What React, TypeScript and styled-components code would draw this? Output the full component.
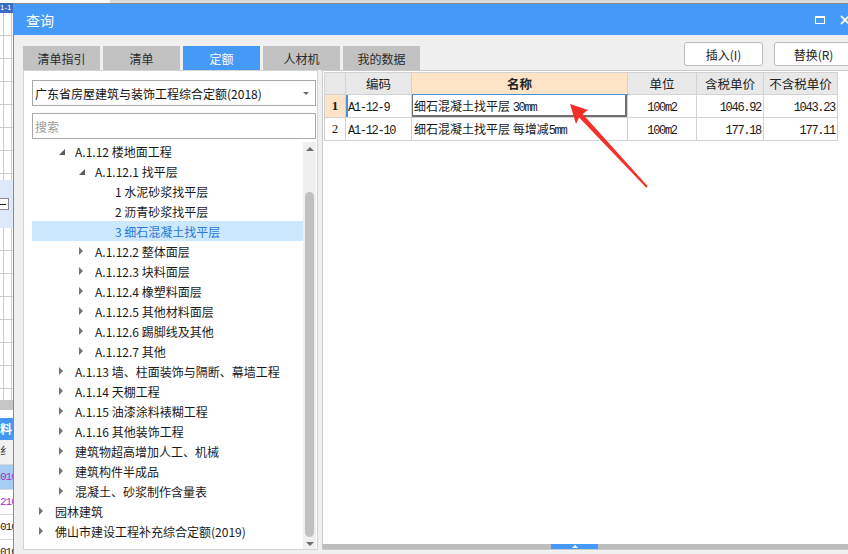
import React from "react";
import styled, { createGlobalStyle } from "styled-components";

const GlobalStyle = createGlobalStyle`
  html, body {
    margin: 0;
    padding: 0;
    background: #fff;
  }
  body {
    font-family: "Noto Sans CJK SC", "Noto Sans", sans-serif;
    overflow: hidden;
  }
  * {
    box-sizing: border-box;
  }
`;

const Screen = styled.div`
  width: 848px;
  height: 554px;
  overflow: hidden;
  display: flex;
  flex-direction: column;
  background: #fff;
`;

const TopStrip = styled.div`
  height: 3px;
  flex-shrink: 0;
  background: linear-gradient(to right, #fafafa 0 110px, #dcdcdc 110px);
`;

const Desk = styled.div`
  flex: 1;
  min-height: 0;
  display: flex;
`;

/* the spreadsheet window that peeks out behind the dialog */
const BackWindow = styled.div`
  width: 13px;
  flex-shrink: 0;
  display: flex;
  flex-direction: column;
  overflow: hidden;
  font-family: "Liberation Sans", sans-serif;
`;

const BackCaption = styled.div`
  height: 10px;
  flex-shrink: 0;
  background: #3a6dc2;
  color: #fff;
  font-size: 8px;
  line-height: 10px;
  white-space: nowrap;
`;

const BackSheet = styled.div<{ $h: number }>`
  height: ${({ $h }) => $h}px;
  flex-shrink: 0;
  background-color: #fff;
  background-image: linear-gradient(
      to right,
      transparent 3px,
      #f9c57f 3px,
      #f9c57f 4px,
      transparent 4px,
      transparent 11px,
      #f9c57f 11px,
      #f9c57f 12px,
      transparent 12px
    ),
    repeating-linear-gradient(to bottom, transparent 0 22px, #cdcdcd 22px 23px);
`;

const BackBand = styled.div`
  height: 48px;
  flex-shrink: 0;
  background: #dde8fb;
  display: flex;
  align-items: center;
`;

const BackToggle = styled.div`
  width: 9px;
  height: 12px;
  border: 1px solid #8a8a8a;
  border-left: none;
  background: #fff;
  display: flex;
  align-items: center;

  &::after {
    content: "";
    width: 6px;
    height: 1px;
    background: #222;
  }
`;

const BackBar = styled.div`
  height: 10px;
  margin-bottom: 8px;
  flex-shrink: 0;
  background: #c6c6c6;
`;

const BackHeader = styled.div`
  height: 22px;
  flex-shrink: 0;
  background: #4597f2;
  color: #fff;
  font-weight: 700;
  font-size: 12px;
  line-height: 22px;
  font-family: "Noto Sans CJK SC", sans-serif;
  white-space: nowrap;
  overflow: hidden;
`;

const BackRow = styled.div<{ $bg: string; $color: string }>`
  height: 25px;
  flex-shrink: 0;
  background: ${({ $bg }) => $bg};
  color: ${({ $color }) => $color};
  border-bottom: 1px solid #d8d8d8;
  font-size: 11px;
  line-height: 24px;
  white-space: nowrap;
  overflow: hidden;
  font-family: "Liberation Mono", "Noto Sans CJK SC", monospace;
  letter-spacing: -1px;
`;

/* dialog */
const Dialog = styled.div`
  width: 848px;
  flex-shrink: 0;
  display: flex;
  flex-direction: column;
  border-left: 1px solid #8c8c8c;
  border-top: 1px solid #8c8c8c;
  background: #f0f0f0;
`;

const TitleBar = styled.div`
  height: 31px;
  flex-shrink: 0;
  background: #4599f7;
  display: flex;
  align-items: center;
  padding: 0 11px 0 12px;
  color: #fff;
  font-size: 14px;
`;

const WindowControls = styled.div`
  margin-left: auto;
  display: flex;
  align-items: center;
  gap: 15px;
`;

const MaximizeIcon = styled.div`
  width: 10px;
  height: 8px;
  border: 1.5px solid #fff;
  border-top-width: 2.5px;
`;

const DialogBody = styled.div`
  flex: 1;
  min-height: 0;
  display: flex;
  flex-direction: column;
  padding: 7px 8px 4px 9px;
`;

const HeaderRow = styled.div`
  height: 28px;
  flex-shrink: 0;
  display: flex;
`;

const Tabs = styled.div`
  align-self: flex-end;
  display: flex;
  gap: 3px;
`;

const Tab = styled.div<{ $active?: boolean }>`
  width: 77px;
  height: 24px;
  display: flex;
  align-items: center;
  justify-content: center;
  font-size: 12px;
  background: ${({ $active }) => ($active ? "#4599f7" : "#c2c2c2")};
  color: ${({ $active }) => ($active ? "#fff" : "#2a2a2a")};
`;

const Actions = styled.div`
  margin-left: auto;
  display: flex;
  gap: 11px;
`;

const ActionButton = styled.button`
  width: 79px;
  height: 24px;
  background: #fff;
  border: 1px solid #bcbcbc;
  border-radius: 3px;
  font-family: "Noto Sans CJK SC", sans-serif;
  font-size: 12px;
  color: #222;
  padding: 0;
`;

const ContentRow = styled.div`
  flex: 1;
  min-height: 0;
  display: flex;
  gap: 4px;
`;

const LeftPanel = styled.div`
  width: 295px;
  flex-shrink: 0;
  display: flex;
  flex-direction: column;
  background: #fff;
  border: 1px solid #d4d4d4;
  padding: 9px 1px 0 8px;
`;

const FieldBox = styled.div`
  height: 26px;
  flex-shrink: 0;
  border: 1px solid #a9a9a9;
  display: flex;
  align-items: center;
  padding: 0 6px 0 2px;
  font-size: 12px;
  color: #111;
  & + & {
    margin-top: 7px;
  }
`;

const Placeholder = styled.span`
  color: #9a9a9a;
`;

const Caret = styled.span`
  margin-left: auto;
  border-top: 3px solid #6a6a6a;
  border-left: 3px solid transparent;
  border-right: 3px solid transparent;
`;

const TreeArea = styled.div`
  flex: 1;
  min-height: 0;
  margin-top: 3px;
  display: flex;
`;

const TreeList = styled.div`
  flex: 1;
  overflow: hidden;
  padding-top: 0;
  margin-top: -1px;
`;

const TreeRow = styled.div<{ $level: number; $selected?: boolean }>`
  height: 20px;
  display: flex;
  align-items: center;
  padding-left: ${({ $level }) => $level * 20}px;
  font-size: 12px;
  white-space: nowrap;
  background: ${({ $selected }) => ($selected ? "#cce8ff" : "transparent")};
  color: ${({ $selected }) => ($selected ? "#2b78d6" : "#1a1a1a")};
`;

const Toggle = styled.span`
  width: 23px;
  height: 20px;
  flex-shrink: 0;
  display: flex;
  align-items: center;
  padding-left: 7px;
`;

const Collapsed = styled.span`
  border-left: 4px solid #747474;
  border-top: 4px solid transparent;
  border-bottom: 4px solid transparent;
`;

const Expanded = styled.span`
  margin-top: 1px;
  border-bottom: 6px solid #5a5a5a;
  border-left: 6px solid transparent;
`;

const ScrollTrack = styled.div`
  width: 13px;
  flex-shrink: 0;
  display: flex;
  flex-direction: column;
  align-items: center;
  background: #efefef;
  padding: 5px 0 3px;
`;

const ArrowUp = styled.span`
  border-bottom: 4px solid #6e6e6e;
  border-left: 4px solid transparent;
  border-right: 4px solid transparent;
`;

const ArrowDown = styled.span`
  margin-top: 5px;
  border-top: 4px solid #6e6e6e;
  border-left: 4px solid transparent;
  border-right: 4px solid transparent;
`;

const Thumb = styled.div`
  width: 9px;
  margin-top: 41px;
  flex: 1;
  border-radius: 5px;
  background: #c1c1c1;
`;

const RightPanel = styled.div`
  flex: 1;
  min-width: 0;
  display: flex;
  flex-direction: column;
  background: #fff;
  border: 1px solid #c9c9c9;
`;

const TableArea = styled.div`
  flex: 1;
  min-height: 0;
  position: relative;
  padding: 1px;
`;

const Grid = styled.table`
  border-collapse: collapse;
  table-layout: fixed;
  width: 513px;
  font-size: 12px;
  color: #1a1a1a;
`;

const HeadCell = styled.th<{ $w: number; $accent?: boolean }>`
  width: ${({ $w }) => $w}px;
  height: 22px;
  padding: 0;
  background: ${({ $accent }) => ($accent ? "#fde4c6" : "#e8e8e8")};
  border: 1px solid #d2d2d2;
  border-bottom-color: ${({ $accent }) => ($accent ? "#4a90e2" : "#d2d2d2")};
  font-weight: ${({ $accent }) => ($accent ? 700 : 400)};
  font-size: 12.5px;
  color: #222;
  text-align: center;
`;

const RowNum = styled.td<{ $active?: boolean }>`
  height: 23px;
  padding: 0;
  border: 1px solid #d2d2d2;
  text-align: center;
  font-family: "Liberation Serif", serif;
  font-size: 13px;
  font-weight: ${({ $active }) => ($active ? 700 : 400)};
  background: ${({ $active }) => ($active ? "#fde4c6" : "#fff")};
`;

const Cell = styled.td<{ $align?: string; $focus?: boolean; $mark?: boolean }>`
  height: 23px;
  padding: 0 2px;
  border: 1px solid #d2d2d2;
  text-align: ${({ $align }) => $align || "left"};
  white-space: nowrap;
  overflow: hidden;
  box-shadow: ${({ $focus, $mark }) =>
    $focus
      ? "inset -2px -2px 0 #707070, inset 1px 0 0 #707070"
      : $mark
      ? "inset 2px 0 0 #4a90e2"
      : "none"};
`;

const Mono = styled.span`
  font-family: "Liberation Mono", monospace;
  font-size: 12px;
  letter-spacing: -1.3px;
`;

const ArrowMark = styled.svg`
  position: absolute;
  left: 217px;
  top: 24px;
  pointer-events: none;
`;

const SplitBar = styled.div`
  height: 5px;
  flex-shrink: 0;
  background: #bdbdbd;
  display: flex;
  padding-left: 228px;
`;

const SplitHandle = styled.div`
  width: 47px;
  background: #4599f7;
  display: flex;
  justify-content: center;
  align-items: center;

  &::after {
    content: "";
    border-bottom: 3px solid #fff;
    border-left: 3px solid transparent;
    border-right: 3px solid transparent;
  }
`;

type NodeState = "open" | "closed" | "leaf";

interface TreeNode {
  level: number;
  label: string;
  state: NodeState;
  selected?: boolean;
}

const treeNodes: TreeNode[] = [
  { level: 1, label: "A.1.12 楼地面工程", state: "open" },
  { level: 2, label: "A.1.12.1 找平层", state: "open" },
  { level: 3, label: "1 水泥砂浆找平层", state: "leaf" },
  { level: 3, label: "2 沥青砂浆找平层", state: "leaf" },
  { level: 3, label: "3 细石混凝土找平层", state: "leaf", selected: true },
  { level: 2, label: "A.1.12.2 整体面层", state: "closed" },
  { level: 2, label: "A.1.12.3 块料面层", state: "closed" },
  { level: 2, label: "A.1.12.4 橡塑料面层", state: "closed" },
  { level: 2, label: "A.1.12.5 其他材料面层", state: "closed" },
  { level: 2, label: "A.1.12.6 踢脚线及其他", state: "closed" },
  { level: 2, label: "A.1.12.7 其他", state: "closed" },
  { level: 1, label: "A.1.13 墙、柱面装饰与隔断、幕墙工程", state: "closed" },
  { level: 1, label: "A.1.14 天棚工程", state: "closed" },
  { level: 1, label: "A.1.15 油漆涂料裱糊工程", state: "closed" },
  { level: 1, label: "A.1.16 其他装饰工程", state: "closed" },
  { level: 1, label: "建筑物超高增加人工、机械", state: "closed" },
  { level: 1, label: "建筑构件半成品", state: "closed" },
  { level: 1, label: "混凝土、砂浆制作含量表", state: "closed" },
  { level: 0, label: "园林建筑", state: "closed" },
  { level: 0, label: "佛山市建设工程补充综合定额(2019)", state: "closed" },
];

interface QuotaRow {
  code: string;
  name: string;
  spec: string;
  unit: string;
  taxed: string;
  untaxed: string;
}

const quotaRows: QuotaRow[] = [
  { code: "A1-12-9", name: "细石混凝土找平层 ", spec: "30mm", unit: "100m2", taxed: "1046.92", untaxed: "1043.23" },
  { code: "A1-12-10", name: "细石混凝土找平层 每增减", spec: "5mm", unit: "100m2", taxed: "177.18", untaxed: "177.11" },
];

const columns = [
  { title: "", width: 21 },
  { title: "编码", width: 66 },
  { title: "名称", width: 216, accent: true },
  { title: "单位", width: 69 },
  { title: "含税单价", width: 67 },
  { title: "不含税单价", width: 74 },
];

const tabs = ["清单指引", "清单", "定额", "人材机", "我的数据"];

const backRows = [
  { text: "纟", bg: "#f1f1f1", color: "#333" },
  { text: "010", bg: "#a7cdf4", color: "#a133c9" },
  { text: "210", bg: "#fff", color: "#a133c9" },
  { text: "010", bg: "#fff", color: "#222" },
  { text: "010", bg: "#fff", color: "#222" },
];

function App() {
  return (
    <>
      <GlobalStyle />
      <Screen>
        <TopStrip />
        <Desk>
          <BackWindow>
            <BackCaption>1-1</BackCaption>
            <BackSheet $h={167} />
            <BackBand>
              <BackToggle />
            </BackBand>
            <BackSheet $h={172} />
            <BackBar />
            <BackHeader>料</BackHeader>
            {backRows.map((row, i) => (
              <BackRow key={`back-${i}`} $bg={row.bg} $color={row.color}>
                {row.text}
              </BackRow>
            ))}
          </BackWindow>

          <Dialog>
            <TitleBar>
              查询
              <WindowControls>
                <MaximizeIcon />
                <svg width="10" height="10" viewBox="0 0 10 10">
                  <path d="M1 1 L9 9 M9 1 L1 9" stroke="#fff" strokeWidth="1.8" />
                </svg>
              </WindowControls>
            </TitleBar>

            <DialogBody>
              <HeaderRow>
                <Tabs>
                  {tabs.map((tab) => (
                    <Tab key={tab} $active={tab === "定额"}>
                      {tab}
                    </Tab>
                  ))}
                </Tabs>
                <Actions>
                  <ActionButton>插入(I)</ActionButton>
                  <ActionButton>替换(R)</ActionButton>
                </Actions>
              </HeaderRow>

              <ContentRow>
                <LeftPanel>
                  <FieldBox>
                    广东省房屋建筑与装饰工程综合定额(2018)
                    <Caret />
                  </FieldBox>
                  <FieldBox>
                    <Placeholder>搜索</Placeholder>
                  </FieldBox>

                  <TreeArea>
                    <TreeList>
                      {treeNodes.map((node) => (
                        <TreeRow key={node.label} $level={node.level} $selected={node.selected}>
                          <Toggle>
                            {node.state === "open" && <Expanded />}
                            {node.state === "closed" && <Collapsed />}
                          </Toggle>
                          {node.label}
                        </TreeRow>
                      ))}
                    </TreeList>
                    <ScrollTrack>
                      <ArrowUp />
                      <Thumb />
                      <ArrowDown />
                    </ScrollTrack>
                  </TreeArea>
                </LeftPanel>

                <RightPanel>
                  <TableArea>
                    <Grid>
                      <thead>
                        <tr>
                          {columns.map((col, i) => (
                            <HeadCell key={`col-${i}`} $w={col.width} $accent={col.accent}>
                              {col.title}
                            </HeadCell>
                          ))}
                        </tr>
                      </thead>
                      <tbody>
                        {quotaRows.map((row, i) => (
                          <tr key={row.code}>
                            <RowNum $active={i === 0}>{i + 1}</RowNum>
                            <Cell $mark={i === 0}>
                              <Mono>{row.code}</Mono>
                            </Cell>
                            <Cell $focus={i === 0}>
                              {row.name}
                              <Mono>{row.spec}</Mono>
                            </Cell>
                            <Cell $align="center">
                              <Mono>{row.unit}</Mono>
                            </Cell>
                            <Cell $align="right">
                              <Mono>{row.taxed}</Mono>
                            </Cell>
                            <Cell $align="right">
                              <Mono>{row.untaxed}</Mono>
                            </Cell>
                          </tr>
                        ))}
                      </tbody>
                    </Grid>

                    <ArrowMark width="115" height="100" viewBox="0 0 115 100">
                      <polygon
                        points="30,9 48,15 42.7,19 107.7,91.3 106.3,92.7 39.1,22.4 36,29"
                        fill="#f3302a"
                      />
                    </ArrowMark>
                  </TableArea>
                  <SplitBar>
                    <SplitHandle />
                  </SplitBar>
                </RightPanel>
              </ContentRow>
            </DialogBody>
          </Dialog>
        </Desk>
      </Screen>
    </>
  );
}

export default App;
